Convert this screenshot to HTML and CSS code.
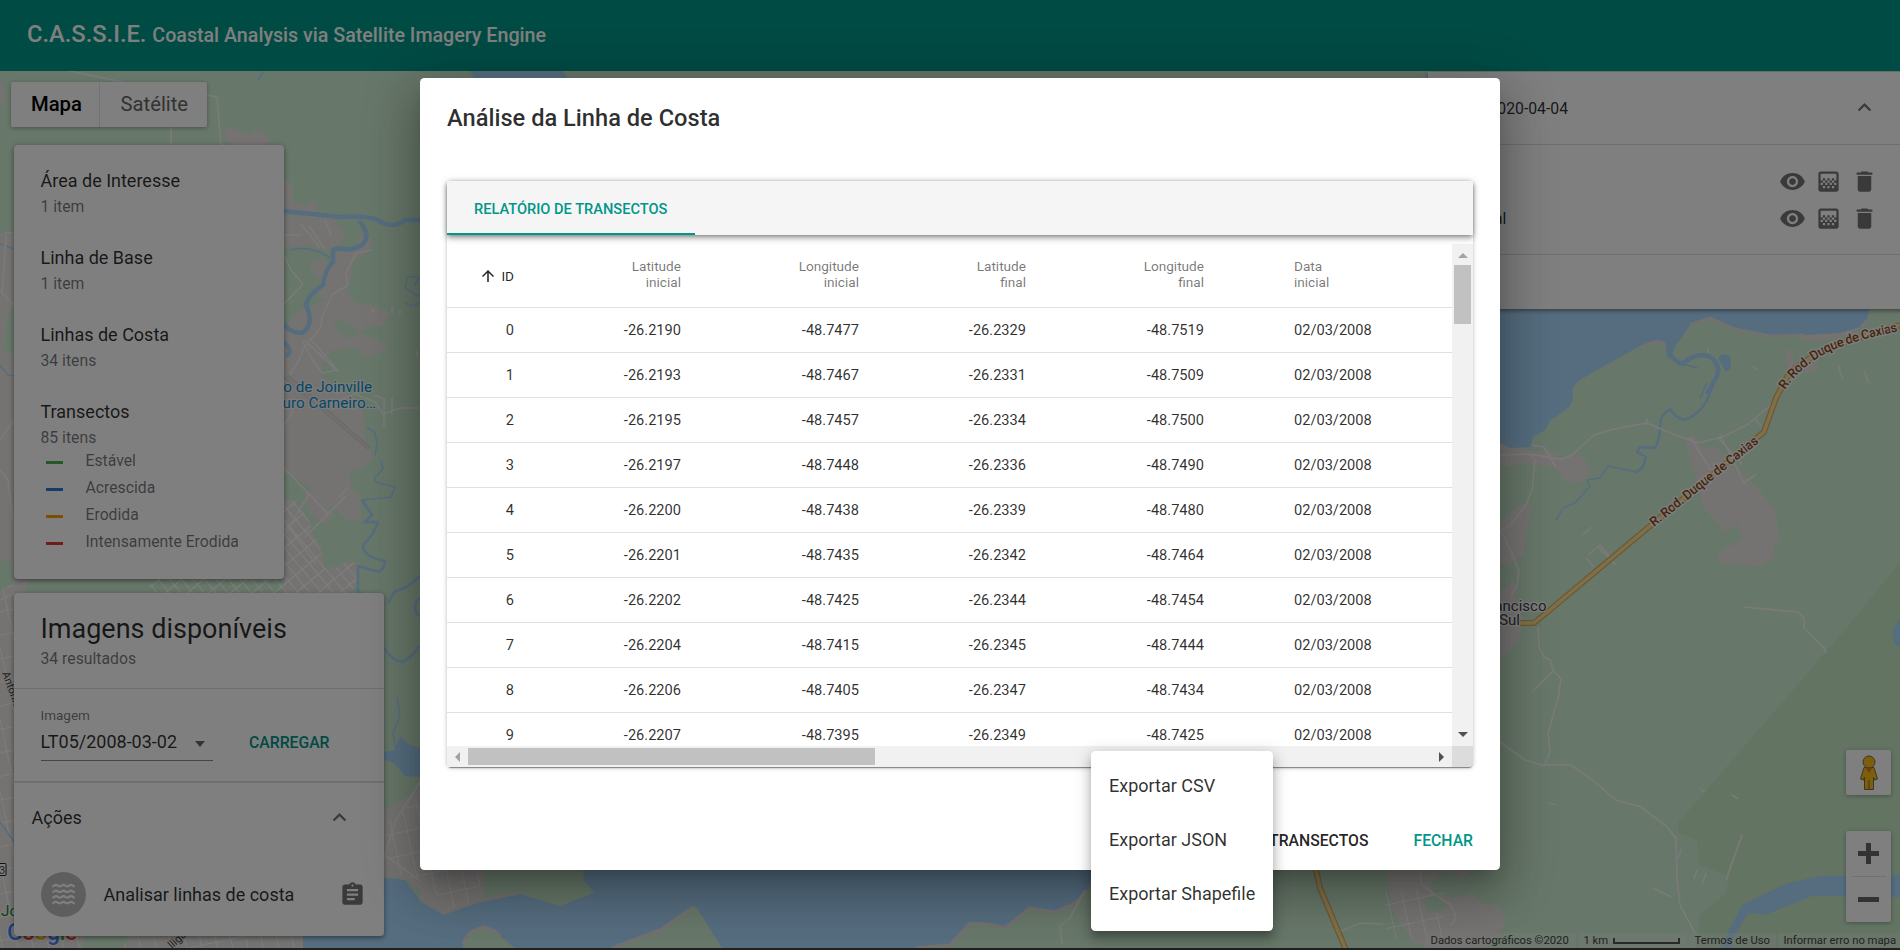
FILE: index.html
```html
<!DOCTYPE html>
<html lang="pt-BR">
<head>
<meta charset="utf-8">
<title>C.A.S.S.I.E.</title>
<link rel="stylesheet" href="styles.css">
</head>
<body>
<svg class="sprites" aria-hidden="true">
  <symbol id="i-eye" viewBox="0 0 24 24"><path d="M12 4.5C7 4.5 2.73 7.61 1 12c1.73 4.39 6 7.5 11 7.5s9.27-3.11 11-7.5c-1.73-4.39-6-7.5-11-7.5zM12 17c-2.76 0-5-2.24-5-5s2.24-5 5-5 5 2.24 5 5-2.24 5-5 5zm0-8c-1.66 0-3 1.34-3 3s1.34 3 3 3 3-1.34 3-3-1.34-3-3-3z"/></symbol>
  <symbol id="i-gradient" viewBox="0 0 24 24"><path d="M11 9h2v2h-2zm-2 2h2v2H9zm4 0h2v2h-2zm2-2h2v2h-2zM7 9h2v2H7zm12-6H5c-1.1 0-2 .9-2 2v14c0 1.100.9 2 2 2h14c1.100 0 2-.9 2-2V5c0-1.100-.9-2-2-2zM9 18H7v-2h2v2zm4 0h-2v-2h2v2zm4 0h-2v-2h2v2zm2-7h-2v2h2v2h-2v-2h-2v2h-2v-2h-2v2H9v-2H7v2H5v-2h2v-2H5V5h14v6z"/></symbol>
  <symbol id="i-delete" viewBox="0 0 24 24"><path d="M6 19c0 1.100.9 2 2 2h8c1.100 0 2-.9 2-2V7H6v12zM19 4h-3.500l-1-1h-5l-1 1H5v2h14V4z"/></symbol>
  <symbol id="i-less" viewBox="0 0 24 24"><path d="M12 8l-6 6 1.410 1.410L12 10.830l4.590 4.580L18 14z"/></symbol>
  <symbol id="i-up" viewBox="0 0 24 24"><path d="M4 12l1.410 1.410L11 7.830V20h2V7.830l5.580 5.590L20 12l-8-8-8 8z"/></symbol>
  <symbol id="i-clip" viewBox="0 0 24 24"><path d="M19 3h-4.180C14.400 1.840 13.300 1 12 1c-1.300 0-2.400.84-2.820 2H5c-1.100 0-2 .9-2 2v14c0 1.100.9 2 2 2h14c1.100 0 2-.9 2-2V5c0-1.100-.9-2-2-2zm-7 0c.55 0 1 .45 1 1s-.45 1-1 1-1-.45-1-1 .45-1 1-1zm2 14H7v-2h7v2zm3-4H7v-2h10v2zm0-4H7V7h10v2z"/></symbol>
  <symbol id="i-waves" viewBox="0 0 24 24"><path fill="none" stroke="currentColor" stroke-width="1.900" d="M2 4.800c1.700 0 1.700-1.300 3.330-1.300s1.700 1.300 3.330 1.300 1.700-1.300 3.340-1.300 1.700 1.300 3.330 1.300 1.700-1.300 3.330-1.300S20.300 4.800 22 4.800M2 9.800c1.700 0 1.700-1.300 3.330-1.300s1.700 1.300 3.330 1.300 1.700-1.300 3.340-1.300 1.700 1.300 3.330 1.300 1.700-1.300 3.330-1.300S20.300 9.800 22 9.800M2 14.800c1.700 0 1.700-1.300 3.330-1.300s1.700 1.300 3.330 1.300 1.700-1.300 3.340-1.300 1.700 1.300 3.330 1.300 1.700-1.300 3.330-1.300 1.700 1.300 3.340 1.300M2 19.800c1.700 0 1.700-1.300 3.330-1.300s1.700 1.300 3.330 1.300 1.700-1.300 3.340-1.300 1.700 1.300 3.330 1.300 1.700-1.300 3.330-1.300 1.700 1.300 3.340 1.300"/></symbol>
</svg>

<header class="topbar"><h1 class="brand">C.A.S.S.I.E. <small>Coastal Analysis via Satellite Imagery Engine</small></h1></header>

<main class="stage">
<svg class="map" viewBox="0 71 1900 877">
  <defs>
    <pattern id="blocks" width="9" height="14" patternUnits="userSpaceOnUse" patternTransform="rotate(-40)"><path d="M0 0H9M0 0V14" stroke="#fff" stroke-width="1.800" fill="none"/></pattern>
    <pattern id="streets" width="15" height="23" patternUnits="userSpaceOnUse" patternTransform="rotate(-12)"><path d="M0 0H15M0 0V23" stroke="#fff" stroke-width="1.500" fill="none"/></pattern>
    <path id="road-a" d="M1654 527L1762 440"/>
    <path id="road-b" d="M1785 390Q1798 370 1821 356T1900 331"/>
  </defs>
  <rect class="land" y="71" width="1900" height="877"/>
  <!-- built-up areas -->
  <g class="urban">
    <path d="M0 71v32l5 1V90l-4-8zM0 233h14v70l-8 20-2 30H14V948H0zM14 579h110l20 14H14z"/>
    <path d="M222 137l6-11 10 4 12 5 10-7 10 12-4 11-20 3z"/>
    <path d="M284 180l9 5v17l12 3 8-5 5 4-2 8-32-1zM284 217l41-3 8 3 12 16-5 14-13 3-22-5-21 3z"/>
    <path d="M310 262l12-4 6 6-2 12-8 1-8-8z"/>
    <path d="M326 300l-8-4 7-26 12-18 20-6 3-10 8-1 5 8-3 7-17 12-1 14-5 13 8 14 20 3 14 7-6 13-14-1-8 7-11-9-14-3-2 9 16 10 10-7 15 8 13 5-3 6-22 8-5-11-26 2-8 8-3 18 18 12 16 10 9 12 1 28 8 19-8 10-16 5 3 18 9 14 1 13-10 5-10-7-38-32-22-12-21-1V345l12-12 14-8 8-12z"/>
    <path d="M284 452l20 12 3 13-10 3-13-8zM304 493l9-5 12 7 9 20-9 9-15-10zM284 500l12 1 13 19 4 14 8 16 4 18 12-1 13-8 7 6-1 21-17 17h-55zM338 497l14-7 8 5-2 16-4 6-14-10z"/>
    <path d="M384 850V810l36-20v100l-16-12-20-2zM303 936v12H14v-12z"/>
    <path d="M420 870h64v30l-38 14-26-16z"/>
    <path d="M1500 443h10l20 8 22 0 8 8 14-5 11 5 6 11-8 12-18-1-10-14-28-4-27 4z"/>
    <path d="M1500 522l22-19 10 4-6 24-2 22-16 12-8-1zM1500 590l12-8 6 3-3 21 10 14-8 22-17 19z"/>
    <path d="M1685 437l9-1 10 14 10-4 14 14 12 10 20 21 16 20 1 14 3 12-7 12 1 8-13 9-44-3 2-10 22-14-2-15-14 8-22-25z"/>
    <path d="M1785 350h5l5 16 22-1 1 4-10 4-20-4z"/>
    <path d="M1388 870h82l-8 9-16-8-15 11 1 10 20 6 20-5 10 11 16 1 8 17-10 17-18 9-17-3-4 6-28-4-15-5-15-20-9-20z"/>
    <path d="M1669 330l3 4 1 26-4-2zM1793 335l45-5 22-14 9-7-2 14-12 9-20 7-22 3z"/>
  </g>
  <path d="M284 500l12 1 13 19 4 14 8 16 4 18 12-1 13-8 7 6-1 21-17 17H150v-24h134z" fill="url(#blocks)"/>
  <path d="M0 580h14v368H0zM14 936h289v12H14zM384 826l36-30v85l-36-12zM420 870h60v32l-34 8zM1385 890h60v50h-60z" fill="url(#streets)"/>
  <path class="land" d="M0 560l10 1 4 22-14 7zM85 936h45l-8 12H82zM30 579h100l15 14H25zM4 185h10v50H4zM1425 900l12-6 12 10-10 9-14-3z"/>
  <path class="wood" d="M1900 562L1845 630 1678 823l1 10 18 7 2 25 30 11-3 17-26 22-3 33h203z"/>
  <!-- sea and bays -->
  <g class="water">
    <path d="M470 71h93l8 12h-94z"/>
    <path d="M1500 309h369l-1 8-8 10-20 6-35 2-35 1-35-7-25-11-20 7-10 15-6 7-2 12-5-2-2-15-7-2-18 6-25 14-20 11-18 11-5 8 1 8-3 8-10 8-10 6-5 10-12 7-3 10-20 1-10-5z"/>
    <path d="M1719 950l23-45 45-22 33-7 80-1v22l-88-1-47 19-17-2-13 22-5 15zM1900 618l-8 13 3 14 5 2z"/>
    <path d="M303 948v-12h81v-58l21 2 15 20 25 14 35-12 40-8 40 12 34-13-10-13-1-10h510l-5 20-13 13-20 9-25-4-25 20-17-4-18-1-20 22-35 3v3z"/>
    <path d="M384 752l11-2 5-14 10 9 10 3v29l-15-1-10-12-11-5zM1722 354l8 2 1 12-5 4-8-14z"/>
  </g>
  <path class="land" d="M462 948l5-13 18-8 15 9 15 12zM612 948l48-18 33-24 4 2 25 40z"/>
  <path class="shore" d="M463 944q5-14 21-17 10 2 16 9M612 948l48-18 33-23M915 948l35-3 20-22 18 1 17 4 25-20 25 4 20-9 13-13M420 900l24 13 34-12 40-8M1640 348q20-12 26-2M1690 325l20-7 25 11 35 7 35-1"/>
  <!-- rivers -->
  <g class="river">
    <path class="r4" d="M284 211L340 217Q365 215 378 220 392 230 405 220L420 220"/>
    <path class="r4" d="M359 221Q372 235 362 245 350 252 338 248L333 250V262Q325 270 323 285 308 295 306 305 315 325 302 333 290 333 284 324M284 342q10 10 2 14"/>
    <path class="r2" d="M362 500l10 15-7 7 13 0q-4 13-15 23 0 12 22 16-2 13-10 10l-17-5v25l9 7M388 604l6-12 13-5 13-11M384 648q10 14 18 14 10-4 17-16M420 598q-8 6-3 16l3 2"/>
    <path class="r1" d="M290 250q22-5 40 8M367 428l8 4 2 12-2 12M381 461l2 8-8 8 0 5 20 5-4 10-29 3M408 276l11 2-5 8M408 276l-3 12 13 8 2-3M405 303l8 3 7-3M397 697l3 18-7 18 3 17M0 244l14 5M0 365l8 10 6 1M0 822l14 20M264 71l-6 9"/>
    <path class="r4" d="M1669 345Q1668 358 1682 364 1700 350 1712 358 1722 368 1716 378L1707 394"/>
    <path class="r2" d="M1716 378l-9 22q-7 14-22 20-10-2-15-11-10 6-10 16 0 15-5 23l-15-1-3 5 9 5-3 10-8 6"/>
    <path class="r1" d="M1637 472l-29-6-8 12-13 2 3 6-15 17-12 5-7 12M1682 364l16 4M1707 383l-7 15"/>
  </g>
  <!-- minor roads -->
  <path class="street" d="M70 71l52 11M207 95l10 2 4 48 28 4M171 127l0 18M4 233h10M6 235l-4 60M0 290l14 15M0 440l14-20M0 470l8 10 5 40M284 235h18M300 223l20 25M309 226l15 22M325 220l6 15M284 255l7 15 12 14-19 20M372 250l-16 3-10 20 2 12-15 9-10 20-3 15-16 18-5 13-14 22M304 340l32 30-14 3-10-14-9-17M309 337l30 35M284 425l10-15M284 407l8-7M284 468l25 26-25 42M309 494l19 20M305 537l23-23 18-18M339 497l9-9M340 400l15-6 20 8 8 12 18-6h19M374 395l12 5M384 398v30M392 397v18M284 520l20 28 12 16M0 600l14-7M384 854l36 27M384 858l12-38 24-38M372 308l2 4M392 307v6M400 310v5M416 350l2 8M1500 455l30-1 22 4 10 1 10-4 22-20 20-6 33-6 31 13 20 7 24-6 25-12 17-14 10-9M1530 454l5 6-3 30-6 15-16 20-9 6 10 20 8 20-2 15-6 10M1532 445l12 2 12 20M1690 437l24 38M1720 434l24 49 12-9M1717 437l25 27M1754 418l7 8M1647 425v-7M1743 607l55 5 6 6v10l20 20 2 5M1538 627l1 20 5 10 6 3 3 10 8 9-3 20-6 20-4 15 2 18-5 12M1553 671l-21 21M1500 742l25 18 16 5h30l20 14 25 21 25 7 25 19 10 12 1 42 3 25 15 28M1742 835l-16 45M1732 795l6 4M1700 789l5 3M1549 803l8 2M1582 535l10-8M1588 555l12-10 10 12M1598 547l18 18M1586 558l8 9M1653 888l18 9M1681 849l-3 10M1697 870l-3 9M1706 873l-4 12M1341 931l20-8 22 1M1085 890l-15 28-10 8 2 18M1420 870l1 14 20 15 10 6 5 12-5 8M1838 365l5 15M1864 371l5 12M1753 367l4 3M1708 348v5"/>
  <path class="runway" d="M284 378l84 71 2-2-82-72"/>
  <!-- main roads -->
  <path class="hw-edge" d="M1519 623h15l11-9 105-88 114-94 12-34 14-26 20-14 35-16 55-17M1316 870l4 18 26 62"/>
  <path class="hw" d="M1519 623h15l11-9 105-88 114-94 12-34 14-26 20-14 35-16 55-17M1316 870l4 18 26 62"/>
  <text class="road-label"><textPath href="#road-a" textLength="135">R. Rod. Duque de Caxias</textPath></text>
  <text class="road-label"><textPath href="#road-b" textLength="131">R. Rod. Duque de Caxias</textPath></text>
  <text class="poi" x="372" y="392" text-anchor="end">Aeroporto de Joinville</text>
  <text class="poi" x="376" y="408" text-anchor="end">- Lauro Carneiro…</text>
  <text class="city" x="1546.500" y="611" text-anchor="end">Francisco</text>
  <text class="city" x="1520" y="625" text-anchor="end">do Sul</text>
  <text class="poi green" x="1" y="916">Joi</text>
  <text class="tiny" transform="translate(2 673) rotate(70)">Antônio João</text>
  <text class="tiny" transform="translate(172 949) rotate(-42)">lligator</text>
  <rect x="-8" y="863.500" width="14" height="12" rx="1" fill="#fff" stroke="#222"/><text x="-1" y="874" class="tiny">3</text>
  <text class="glogo" x="7" y="940" textLength="70"><tspan fill="#4285f4">G</tspan><tspan fill="#ea4335">o</tspan><tspan fill="#fbbc04">o</tspan><tspan fill="#4285f4">g</tspan><tspan fill="#34a853">l</tspan><tspan fill="#ea4335">e</tspan></text>
</svg>

<div class="side">
  <div class="maptype"><span class="mt on">Mapa</span><span class="mt">Satélite</span></div>
  <section class="card summary">
    <div class="item"><h3>Área de Interesse</h3><p>1 item</p></div>
    <div class="item"><h3>Linha de Base</h3><p>1 item</p></div>
    <div class="item"><h3>Linhas de Costa</h3><p>34 itens</p></div>
    <div class="item last"><h3>Transectos</h3><p>85 itens</p></div>
    <ul class="legend">
      <li><i class="sw g"></i>Estável</li>
      <li><i class="sw b"></i>Acrescida</li>
      <li><i class="sw o"></i>Erodida</li>
      <li><i class="sw r"></i>Intensamente Erodida</li>
    </ul>
  </section>
  <section class="card images">
    <div class="head"><h2>Imagens disponíveis</h2><p>34 resultados</p></div>
    <div class="pick">
      <div class="field"><label>Imagem</label><div class="select"><span>LT05/2008-03-02</span><i class="caret"></i></div></div>
      <span class="btn load">CARREGAR</span>
    </div>
    <div class="acts"><span>Ações</span><svg class="ic"><use href="#i-less"/></svg></div>
    <div class="act"><span class="avatar"><svg class="ic"><use href="#i-waves"/></svg></span><span class="grow">Analisar linhas de costa</span><svg class="ic"><use href="#i-clip"/></svg></div>
  </section>
</div>

<aside class="layers">
  <div class="lhead"><span class="lname">2020-04-04</span><svg class="ic"><use href="#i-less"/></svg></div>
  <div class="lbody">
    <div class="lrow"><span class="lname"></span><svg class="ic"><use href="#i-eye"/></svg><svg class="ic"><use href="#i-gradient"/></svg><svg class="ic"><use href="#i-delete"/></svg></div>
    <div class="lrow"><span class="lname short">al</span><svg class="ic"><use href="#i-eye"/></svg><svg class="ic"><use href="#i-gradient"/></svg><svg class="ic"><use href="#i-delete"/></svg></div>
  </div>
</aside>

<div class="controls">
  <div class="ctl peg"><svg width="20" height="36" viewBox="0 0 20 36"><g fill="#fbbc16" stroke="#7a6a50" stroke-width="1"><path d="M5 12.500h10l3.500 11.500-3 1-1-3v12.500H5.500V22l-1 3-3-1z"/><circle cx="10" cy="7" r="6"/></g><path d="M6.500 12.500h7L10 18z" fill="#d9782b"/><path d="M10 25v9" stroke="#7a6a50"/></svg></div>
  <div class="ctl zoom"><span class="plus"></span><hr><span class="minus"></span></div>
</div>
<div class="attrib"><span class="a1">Dados cartográficos ©2020</span><span class="a2">1 km<i class="scale"></i></span><span class="a3">Termos de Uso</span><span class="a4">Informar erro no mapa</span></div>
</main>

<div class="backdrop"></div>

<div class="dialog">
  <h2 class="dtitle">Análise da Linha de Costa</h2>
  <div class="report">
    <div class="tabs"><span class="tab">RELATÓRIO DE TRANSECTOS</span></div>
    <div class="scroller">
      <div class="grid">
        <div class="row hd"><span class="sort"><svg class="ic"><use href="#i-up"/></svg>ID</span><span>Latitude<br>inicial</span><span>Longitude<br>inicial</span><span>Latitude<br>final</span><span>Longitude<br>final</span><span>Data<br>inicial</span></div>
        <div class="row"><span>0</span><span>-26.2190</span><span>-48.7477</span><span>-26.2329</span><span>-48.7519</span><span>02/03/2008</span></div>
        <div class="row"><span>1</span><span>-26.2193</span><span>-48.7467</span><span>-26.2331</span><span>-48.7509</span><span>02/03/2008</span></div>
        <div class="row"><span>2</span><span>-26.2195</span><span>-48.7457</span><span>-26.2334</span><span>-48.7500</span><span>02/03/2008</span></div>
        <div class="row"><span>3</span><span>-26.2197</span><span>-48.7448</span><span>-26.2336</span><span>-48.7490</span><span>02/03/2008</span></div>
        <div class="row"><span>4</span><span>-26.2200</span><span>-48.7438</span><span>-26.2339</span><span>-48.7480</span><span>02/03/2008</span></div>
        <div class="row"><span>5</span><span>-26.2201</span><span>-48.7435</span><span>-26.2342</span><span>-48.7464</span><span>02/03/2008</span></div>
        <div class="row"><span>6</span><span>-26.2202</span><span>-48.7425</span><span>-26.2344</span><span>-48.7454</span><span>02/03/2008</span></div>
        <div class="row"><span>7</span><span>-26.2204</span><span>-48.7415</span><span>-26.2345</span><span>-48.7444</span><span>02/03/2008</span></div>
        <div class="row"><span>8</span><span>-26.2206</span><span>-48.7405</span><span>-26.2347</span><span>-48.7434</span><span>02/03/2008</span></div>
        <div class="row"><span>9</span><span>-26.2207</span><span>-48.7395</span><span>-26.2349</span><span>-48.7425</span><span>02/03/2008</span></div>
      </div>
      <div class="vbar"><i class="tri up"></i><i class="vthumb"></i><i class="tri down"></i></div>
      <div class="hbar"><i class="tri left"></i><i class="hthumb"></i><i class="tri right"></i></div>
      <div class="corner"></div>
    </div>
  </div>
  <div class="dactions"><span class="btn dark">TRANSECTOS</span><span class="btn">FECHAR</span></div>
</div>

<div class="menu"><span>Exportar CSV</span><span>Exportar JSON</span><span>Exportar Shapefile</span></div>
</body>
</html>
```

FILE: styles.css
```css
* { box-sizing: border-box; }
body { margin: 0; width: 1900px; height: 950px; overflow: hidden; position: relative; background: #404040; font-family: Roboto, "Noto Sans", sans-serif; font-size: 15.75px; color: rgba(0,0,0,.82); }
h1, h2, h3, p, ul { margin: 0; padding: 0; font-weight: 400; list-style: none; }
.sprites { position: absolute; width: 0; height: 0; }
.ic { width: 27px; height: 27px; fill: #757575; flex: none; display: block; }

.topbar { height: 71px; background: #009688; padding: 0 27px; display: flex; align-items: center; }
.brand { color: #fff; font-size: 23.700px; font-weight: 500; line-height: 36px; margin-top: -2px; }
.brand small { font-size: 19.650px; font-weight: 500; }

.stage { position: relative; height: 877px; overflow: hidden; background: #ceeed3; }
.map { position: absolute; left: 0; top: 0; width: 1900px; height: 877px; }
.land { fill: #ceeed3; }
.wood { fill: #c6e8c6; }
.urban { fill: #ebe7e4; }
.water { fill: #aadaff; }
.shore { fill: none; stroke: #e6e2df; stroke-width: 3; }
.river { fill: none; stroke: #aadaff; stroke-linejoin: round; }
.r4 { stroke-width: 4.500; }
.r2 { stroke-width: 2.500; }
.r1 { stroke-width: 1.500; }
.street { fill: none; stroke: #f6f4f4; stroke-width: 1.600; stroke-linejoin: round; }
.runway { fill: #e4e0de; stroke: #d2cfcd; }
.hw-edge { fill: none; stroke: #e0b060; stroke-width: 6; stroke-linejoin: round; }
.hw { fill: none; stroke: #fbe094; stroke-width: 3.500; stroke-linejoin: round; }
.road-label { font-size: 13px; font-weight: 500; fill: #8a4b1c; stroke: #fff; stroke-opacity: .8; stroke-width: 3; paint-order: stroke; }
.poi { font-size: 15.250px; fill: #0c8fcb; stroke: #fff; stroke-opacity: .7; stroke-width: 2.500; paint-order: stroke; }
.poi.green { fill: #188038; }
.city { font-size: 15px; fill: #444; stroke: #fff; stroke-width: 2.500; paint-order: stroke; }
.tiny { font-size: 11px; fill: #444; }
.glogo { font-size: 23px; font-weight: 500; stroke: #fff; stroke-width: 1.500; paint-order: stroke; }

.side { position: relative; padding: 11px 0 0 14px; width: 400px; }
.card { background: #fff; border-radius: 4px; box-shadow: 0 2px 4px rgba(0,0,0,.3), 0 1px 6px rgba(0,0,0,.2); }
.maptype { display: flex; width: 196px; height: 45px; margin: 0 0 18px -3px; background: #fff; border-radius: 2px; box-shadow: 0 1px 4px rgba(0,0,0,.3); font-size: 20.250px; line-height: 45px; }
.mt { color: #666; padding-left: 20.500px; flex: 1; }
.mt.on { color: #000; font-weight: 500; padding-left: 20px; flex: 0 0 89px; border-right: 1px solid #e6e6e6; }
.summary { width: 270px; height: 434px; padding: 24px 26.500px; }
.item { margin-bottom: 26px; }
.item.last { margin-bottom: -4px; }
.item h3 { font-size: 18px; line-height: 24px; }
.item p, .head p { line-height: 27px; color: rgba(0,0,0,.54); }
.legend li { display: flex; align-items: center; height: 27px; color: rgba(0,0,0,.54); }
.sw { width: 17px; height: 3px; margin: 4px 22.500px 0 5.500px; }
.sw.g { background: #4caf50; }
.sw.b { background: #2979d0; }
.sw.o { background: #f5a100; }
.sw.r { background: #e53935; }
.images { width: 370px; height: 343px; margin-top: 14px; }
.head { height: 96px; padding: 20px 26.500px 0; border-bottom: 1px solid #dedede; }
.head h2 { font-size: 27px; line-height: 32px; }
.pick { display: flex; height: 94px; padding: 17px 26.500px 0; border-bottom: 2px solid #dedede; }
.field { width: 172px; height: 55px; border-bottom: 1px solid #8a8a8a; }
.field label { display: block; font-size: 13.500px; line-height: 18px; color: rgba(0,0,0,.54); }
.select { display: flex; align-items: center; justify-content: space-between; padding-right: 8px; font-size: 18px; line-height: 35px; }
.caret { border: 5.500px solid transparent; border-top: 6px solid #666; border-bottom: 0; margin-top: 4px; }
.btn { font-weight: 500; color: #009688; line-height: 36px; }
.btn.dark { color: rgba(0,0,0,.87); }
.load { margin: 19px 0 0 36.500px; }
.acts { display: flex; justify-content: space-between; align-items: center; height: 69px; padding: 0 31px 0 17.500px; font-size: 18px; }
.act { display: flex; align-items: center; height: 85px; padding: 0 18px 0 26.500px; font-size: 18px; }
.avatar { width: 45px; height: 45px; border-radius: 50%; background: #bdbdbd; display: grid; place-items: center; margin-right: 18px; color: #fff; }
.grow { flex: 1; }

.layers { position: absolute; left: 1428px; top: 1px; width: 480px; height: 237px; background: #fff; box-shadow: 0 2px 4px rgba(0,0,0,.4); }
.lhead { display: flex; align-items: center; height: 73px; padding: 0 30px 0 60.500px; border-bottom: 1px solid #dedede; justify-content: space-between; }
.lhead .ic { margin-top: -2px; }
.lbody { height: 110px; padding-top: 18px; border-bottom: 1px solid #dedede; }
.lrow { display: flex; align-items: center; gap: 9px; height: 37px; padding: 0 30px 0 62px; }
.lrow .lname { flex: 1; }
.lrow .short { padding-left: 4px; }

.controls { position: absolute; right: 9px; top: 679px; width: 45px; }
.ctl { background: #fff; border-radius: 2px; box-shadow: 0 1px 4px rgba(0,0,0,.3); display: flex; flex-direction: column; align-items: center; }
.peg { height: 45px; justify-content: center; }
.zoom { height: 91px; margin-top: 36px; justify-content: space-between; }
.zoom hr { width: 34px; height: 1px; border: 0; margin: 0; background: #e0e0e0; }
.plus, .minus { width: 21px; height: 45px; background: linear-gradient(#666, #666) center / 21px 5px no-repeat; }
.plus { background: linear-gradient(#666, #666) center / 21px 5px no-repeat, linear-gradient(#666, #666) center / 5px 21px no-repeat; }
.attrib { position: absolute; right: 0; bottom: 0; display: flex; gap: 2px; font-size: 11.250px; line-height: 15px; color: #444; }
.attrib span { background: rgba(245,245,245,.3); padding-left: 5.500px; display: flex; align-items: center; white-space: nowrap; }
.a1 { width: 151px; }
.a2 { width: 109px; }
.a3 { width: 87px; }
.a4 { width: 122px; }
.scale { width: 67px; height: 6px; margin-left: 5px; border: 2px solid #555; border-top: 0; }

.backdrop { position: absolute; inset: 0; background: rgba(0,0,0,.5); }

.dialog { position: absolute; left: 420px; top: 78px; width: 1080px; height: 792px; padding: 25px 27px 0; background: #fff; border-radius: 4.500px; box-shadow: 0 12px 17px -8px rgba(0,0,0,.2), 0 27px 43px 3px rgba(0,0,0,.14), 0 10px 52px 9px rgba(0,0,0,.2); }
.dtitle { font-size: 23.650px; font-weight: 500; line-height: 30px; margin-bottom: 48px; }
.report { height: 586px; border-radius: 4.500px; background: #fff; box-shadow: 0 2px 1px -1px rgba(0,0,0,.3), 0 1px 1px rgba(0,0,0,.14), 0 1px 4px rgba(0,0,0,.25); }
.tabs { position: relative; height: 54px; background: #f5f5f5; display: flex; box-shadow: 0 2px 4px -1px rgba(0,0,0,.3), 0 4px 6px rgba(0,0,0,.16), 0 1px 8px rgba(0,0,0,.2); }
.tab { width: 248px; padding-left: 27px; line-height: 56px; font-size: 14.625px; font-weight: 500; color: #009688; border-bottom: 2px solid #009688; height: 54px; }
.scroller { margin-top: 9px; height: 523px; display: grid; grid-template: 502px 21px / 1005px 21px; }
.grid { overflow: hidden; font-size: 14.625px; }
.row { display: grid; grid-template-columns: 67px 167px 178px 167px 178px 248px; height: 45px; line-height: 44px; border-bottom: 1px solid #e0e0e0; text-align: right; }
.row > :last-child { text-align: left; padding-left: 90px; }
.hd { height: 64px; font-size: 13.600px; line-height: 16px; padding-top: 14px; color: rgba(0,0,0,.54); }
.sort { display: flex; justify-content: flex-end; align-items: center; gap: 4px; height: 35px; color: rgba(0,0,0,.87); }
.sort .ic { width: 18px; height: 18px; fill: #222; }
.vbar, .hbar { background: #f1f1f1; display: flex; align-items: center; }
.vbar { flex-direction: column; }
.vthumb { width: 17px; height: 59px; background: #c1c1c1; }
.hthumb { height: 17px; width: 407px; background: #c1c1c1; }
.tri { border: 5px solid transparent; }
.tri.up { border-bottom: 5px solid #a3a3a3; border-top: 0; margin: 9px 0 7px; }
.tri.down { border-top: 5px solid #505050; border-bottom: 0; margin: auto 0 9px; }
.tri.left { border-right: 5px solid #a3a3a3; border-left: 0; margin: 0 8px; }
.tri.right { border-left: 5px solid #505050; border-right: 0; margin: 0 8px 0 auto; }
.corner { background: #dcdcdc; border-radius: 0 0 4px 0; }
.dactions { display: flex; justify-content: flex-end; gap: 45px; padding-top: 56px; }

.menu { position: absolute; left: 1091px; top: 751px; width: 182px; height: 180px; padding: 8px 0; display: flex; flex-direction: column; background: #fff; border-radius: 4.500px; font-size: 18px; box-shadow: 0 6px 6px -3px rgba(0,0,0,.2), 0 9px 11px 1px rgba(0,0,0,.14), 0 3px 16px 2px rgba(0,0,0,.16); }
.menu span { height: 54px; line-height: 54px; padding-left: 18px; white-space: nowrap; }
```
